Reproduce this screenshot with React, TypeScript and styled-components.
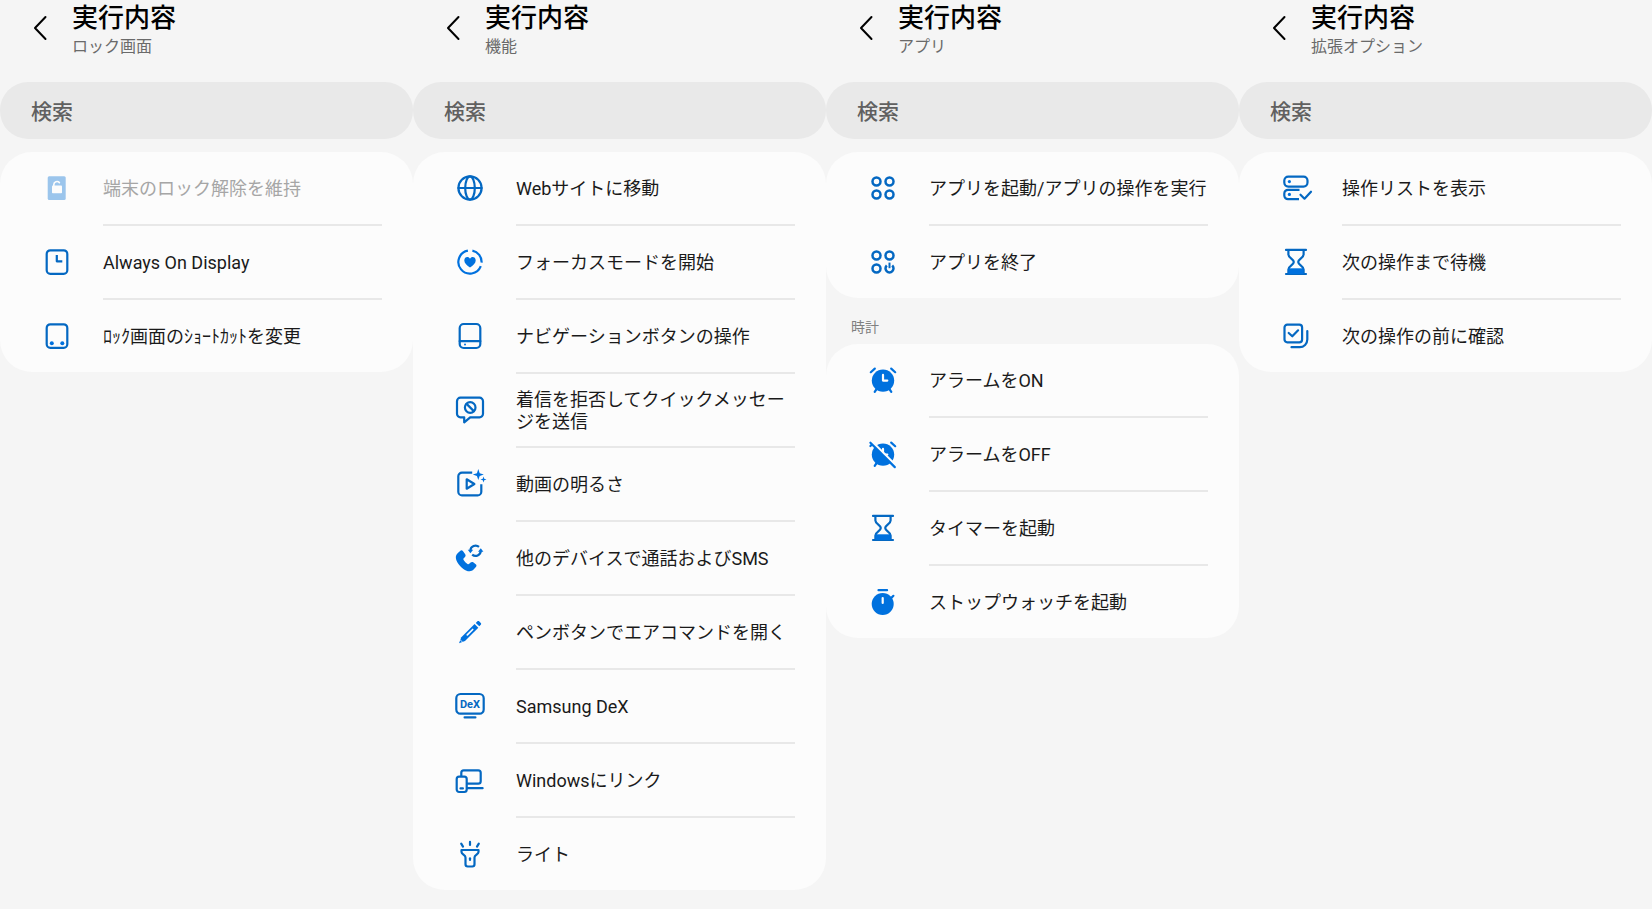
import React, { ReactNode } from 'react';
import styled, { createGlobalStyle } from 'styled-components';

const GlobalStyle = createGlobalStyle`
  *, *::before, *::after { box-sizing: border-box; }
  body {
    margin: 0;
    background: #f5f5f5;
    color: #1a1a1a;
    font-family: Roboto, "Noto Sans CJK JP", sans-serif;
  }
`;

const Page = styled.main`
  display: grid;
  grid-template-columns: repeat(4, minmax(0, 1fr));
  align-items: start;
`;

const Panel = styled.section`
  display: flex;
  flex-direction: column;
`;

const Header = styled.header`
  display: flex;
  align-items: flex-start;
  height: 82px;
`;

const BackButton = styled.button`
  display: flex;
  align-items: center;
  justify-content: flex-end;
  width: 48px;
  height: 56px;
  margin-right: 24px;
  padding: 0;
  border: 0;
  background: none;
  color: #000;
  cursor: pointer;
`;

const Title = styled.h1`
  margin: 0;
  padding-top: 1px;
  font-size: 26px;
  line-height: 34px;
  font-weight: 500;
  color: #000;
`;

const Subtitle = styled.p`
  margin: 2px 0 0;
  font-size: 16px;
  line-height: 20px;
  color: #6a6a6a;
`;

const SearchField = styled.input`
  width: 100%;
  height: 57px;
  padding: 2px 31px 0;
  border: 0;
  border-radius: 28px;
  background: #e9e9e9;
  color: #1a1a1a;
  font-family: inherit;
  font-size: 21px;
  font-weight: 500;

  &::placeholder { color: #606060; opacity: 1; }
`;

const Card = styled.ul`
  margin: 0;
  padding: 0;
  list-style: none;
  border-radius: 32px;
  background: #fcfcfc;
`;

const Groups = styled.div`
  padding-top: 13px;
`;

const GroupLabel = styled.h2`
  margin: 0;
  padding: 19px 25px 7px;
  font-size: 14px;
  line-height: 20px;
  font-weight: 400;
  color: #808080;
`;

const Item = styled.li`
  &:not(:last-child)::after {
    content: "";
    display: block;
    height: 2px;
    margin: 0 31px 0 103px;
    background: #e8e8e8;
  }
`;

const ActionButton = styled.button`
  display: flex;
  align-items: center;
  gap: 30px;
  width: 100%;
  min-height: 72px;
  padding: 12px 30px 12px 41px;
  border: 0;
  background: none;
  color: #1a1a1a;
  font-family: inherit;
  font-size: 18px;
  line-height: 22px;
  text-align: left;
  cursor: pointer;

  &:disabled { color: #a6a6a6; cursor: default; }
`;

const Label = styled.span`
  flex: 1;
  min-width: 0;
  padding-top: 2px;
`;

const Glyph = styled.svg`
  flex: none;
  width: 32px;
  height: 32px;
  overflow: visible;
  fill: none;
  stroke: #0468c2;
  stroke-width: 2.2;
  stroke-linecap: round;
  stroke-linejoin: round;

  .solid { fill: #0071de; stroke: none; }
  .knock { stroke: #fcfcfc; }
  .faded { fill: #9bc5ec; stroke: none; }
  .paper { fill: #fcfcfc; }
  text {
    fill: #0468c2;
    stroke: none;
    font: 700 11px Roboto, sans-serif;
  }
`;

const hourglass = (
  <>
    <path d="M6 3.900h20M6 28h20" />
    <path d="M8.400 4v4.500c0 3.600 5.400 4.600 5.400 7.500s-5.400 3.900-5.400 7.500V28M23.600 4v4.500c0 3.600-5.400 4.600-5.400 7.500s5.400 3.900 5.400 7.500V28" />
    <path className="solid" d="M8.400 22.300h15.200V28H8.400z" />
  </>
);

const spark = (x: number, y: number, r: number) => {
  const k = r * 0.25;
  return (
    <path
      className="solid"
      d={`M${x} ${y - r}L${x + k} ${y - k}L${x + r} ${y}L${x + k} ${y + k}L${x} ${y + r}L${x - k} ${y + k}L${x - r} ${y}L${x - k} ${y - k}Z`}
    />
  );
};

const glyphs = {
  unlock: (
    <>
      <rect className="faded" x="6.7" y="4.3" width="18" height="23.7" rx="1.5" />
      <rect className="paper" x="11" y="13.6" width="10" height="7.7" rx="0.8" stroke="none" />
      <path className="knock" strokeWidth="1.6" d="M12.800 14v-1.400a3.200 3.200 0 0 1 5.600-2" />
    </>
  ),
  clockScreen: (
    <>
      <rect x="5.7" y="4.3" width="20.6" height="23.6" rx="3.6" />
      <path strokeLinecap="butt" d="M15.800 9v6.300h5.500" />
    </>
  ),
  shortcuts: (
    <>
      <rect x="5.7" y="4.3" width="20.6" height="23.6" rx="3.6" />
      <circle className="solid" cx="10.8" cy="23.2" r="2" />
      <circle className="solid" cx="21.3" cy="23.2" r="2" />
    </>
  ),
  globe: (
    <>
      <circle cx="16" cy="16" r="11.6" />
      <ellipse cx="16" cy="16" rx="4.8" ry="11.6" />
      <path d="M4.400 16h23.200" />
    </>
  ),
  focus: (
    <>
      <path strokeLinecap="butt" stroke="#0071de" d="M18.400 4.600A11.600 11.600 0 0 1 27.600 16.600M26.800 20.200A11.600 11.600 0 1 1 13.900 4.600" />
      <path className="solid" d="M16 21.600c-3-2.200-5.700-4.300-5.700-7.200 0-3.600 4.200-4.400 5.700-1.700 1.500-2.700 5.700-1.900 5.700 1.700 0 2.900-2.700 5-5.700 7.200z" />
    </>
  ),
  navigation: (
    <>
      <rect x="5.7" y="4" width="20.6" height="24" rx="4" />
      <path d="M5.700 21.200h20.600" />
      <circle className="solid" cx="11" cy="24.600" r="1" />
    </>
  ),
  declined: (
    <>
      <path d="M6.500 3.700h19a3.500 3.500 0 0 1 3.500 3.500v12.600a3.500 3.500 0 0 1-3.500 3.500h-9.300l-6 5v-5H6.500A3.500 3.500 0 0 1 3 19.800V7.200a3.500 3.500 0 0 1 3.500-3.500z" />
      <circle cx="16.2" cy="13.5" r="5.3" />
      <path d="M12.600 9.900l7.200 7.200" />
    </>
  ),
  video: (
    <>
      <path strokeLinecap="butt" d="M18.200 4.600H8a3.700 3.700 0 0 0-3.700 3.700v15.400A3.700 3.700 0 0 0 8 27.400h15.600a3.700 3.700 0 0 0 3.700-3.700v-7.500" />
      <path d="M12.700 11.300v9.400l7.700-4.700z" />
      {spark(24.3, 6.5, 5.5)}
      {spark(29.5, 11.6, 3)}
    </>
  ),
  callSync: (
    <>
      <path className="solid" d="M3.600 11.300l2.500-2.400c.9-.9 2.100-.7 2.800.2l2.300 3.200c.6.900.5 1.900-.2 2.600l-1.300 1.400c-.5.500-.5 1.100-.1 1.700 1 1.600 2.300 2.900 3.900 3.900.6.400 1.200.4 1.700-.1l1.400-1.300c.7-.7 1.700-.8 2.600-.2l2.500 1.900c.9.700 1.100 1.900.2 2.800l-2.300 2.600C17 30.400 12.400 29.600 8.100 25.900 2.500 20.900-.2 14.800 3.600 11.300z" />
      <path strokeLinecap="butt" d="M16.400 8.500a5.200 5.200 0 0 1 8.600-3.600M26.800 8.900a5.200 5.200 0 0 1-8.600 3.700" />
      <path className="solid" d="M13.800 7.800h5.400l-2.800 3.500zM29.400 9.700h-5.400l2.800-3.500z" />
    </>
  ),
  pen: (
    <>
      <path className="solid" d="M5 27.300l2.300-6L20.600 8l3.700 3.700L11 25z" />
      <path className="solid" d="M21.800 6.900l1.600-1.600c.5-.5 1.200-.5 1.700 0l1.700 1.700c.5.500.5 1.200 0 1.700l-1.500 1.600z" />
      <path className="knock" strokeWidth="1.700" d="M13.300 18.900l5.400-5.400" />
      <path className="knock" strokeWidth="0.8" d="M6.300 23.900l2 2" />
    </>
  ),
  dex: (
    <>
      <rect x="2.3" y="4" width="27.4" height="19.6" rx="4.2" />
      <path d="M10.600 27.400h10.800" />
      <text x="16" y="18" textAnchor="middle">DeX</text>
    </>
  ),
  linked: (
    <>
      <path d="M7.300 12V8.800a2.500 2.500 0 0 1 2.500-2.500h14.400a2.500 2.500 0 0 1 2.500 2.500v8.400a2.500 2.500 0 0 1-2.500 2.500H13.400M13.400 24.200h15.200" />
      <rect x="2.700" y="12.700" width="10" height="15.300" rx="2.400" />
      <path d="M6.500 24.400h2.400" />
    </>
  ),
  torch: (
    <>
      <path d="M16 3.900v3M7.200 5.600l1.800 3M24.800 5.600L23 8.600" />
      <path d="M7.500 12h17v2c0 2.400-4 3-4 5.500v6.800a2.200 2.200 0 0 1-2.200 2.200h-4.600a2.200 2.200 0 0 1-2.200-2.200v-6.800c0-2.500-4-3.100-4-5.500z" />
      <path d="M16 20.300v1.600" />
    </>
  ),
  apps: (
    <g strokeWidth="2.500">
      <circle cx="9.500" cy="9.500" r="4" />
      <circle cx="22.500" cy="9.500" r="4" />
      <circle cx="9.500" cy="22.500" r="4" />
      <circle cx="22.500" cy="22.500" r="4" />
    </g>
  ),
  appsOff: (
    <g strokeWidth="2.500">
      <circle cx="9.500" cy="9.500" r="4" />
      <circle cx="22.500" cy="9.500" r="4" />
      <circle cx="9.500" cy="22.500" r="4" />
      <path strokeLinecap="butt" d="M19.800 19.500a4 4 0 1 0 5.400 0" />
      <path strokeLinecap="butt" strokeWidth="2" d="M22.500 16.600v5.600" />
    </g>
  ),
  alarm: (
    <g stroke="#0071de">
      <circle className="solid" cx="16" cy="16.6" r="11.2" />
      <path d="M3.800 8.200l4-3.600M28.200 8.200l-4-3.600M9.300 25.500l-1.600 2.300M22.700 25.500l1.600 2.300" />
      <path className="knock" d="M16 10.900v5.700h4.300" />
    </g>
  ),
  alarmOff: (
    <g stroke="#0071de">
      <circle className="solid" cx="16" cy="16.6" r="11.2" />
      <path d="M3.400 8l1.500-1.300M28.200 8.200l-4-3.600M9.300 25.500l-1.600 2.300" />
      <path className="knock" d="M16 10.900v5.700h4.300" />
      <path className="knock" strokeWidth="2.400" d="M5.500 4.200l24 24" />
      <path d="M3.400 4.700l24.400 24.400" />
    </g>
  ),
  hourglass,
  stopwatch: (
    <g stroke="#0071de">
      <circle className="solid" cx="15.7" cy="18" r="11" />
      <path d="M11.500 4.200h8.600M24.600 11.600l1.800-1.800" />
      <path className="knock" d="M15.700 12v5" />
    </g>
  ),
  listCheck: (
    <>
      <rect x="4.3" y="4.6" width="23.2" height="10" rx="4" />
      <path strokeLinecap="butt" d="M19.500 17.800H8a3.700 3.700 0 0 0-3.700 3.700v2A3.700 3.700 0 0 0 8 27.200h11" />
      <circle className="solid" cx="9.4" cy="9.6" r="1.6" />
      <circle className="solid" cx="9.4" cy="22.4" r="1.6" />
      <path d="M20.500 22.700l4 4 6.500-7" />
    </>
  ),
  confirm: (
    <>
      <rect x="4.5" y="4.7" width="17.6" height="17.6" rx="2.8" />
      <path d="M8.700 13l3.600 3.300 5.800-6" />
      <path d="M27.300 11v8.600a7.600 7.600 0 0 1-7.600 7.600h-8.200" />
    </>
  ),
} satisfies Record<string, ReactNode>;

type Action = { icon: keyof typeof glyphs; label: string; disabled?: boolean };
type Group = { heading?: string; actions: Action[] };
type Screen = { subtitle: string; groups: Group[] };

const screens: Screen[] = [
  {
    subtitle: 'ロック画面',
    groups: [
      {
        actions: [
          { icon: 'unlock', label: '端末のロック解除を維持', disabled: true },
          { icon: 'clockScreen', label: 'Always On Display' },
          { icon: 'shortcuts', label: 'ﾛｯｸ画面のｼｮｰﾄｶｯﾄを変更' },
        ],
      },
    ],
  },
  {
    subtitle: '機能',
    groups: [
      {
        actions: [
          { icon: 'globe', label: 'Webサイトに移動' },
          { icon: 'focus', label: 'フォーカスモードを開始' },
          { icon: 'navigation', label: 'ナビゲーションボタンの操作' },
          { icon: 'declined', label: '着信を拒否してクイックメッセージを送信' },
          { icon: 'video', label: '動画の明るさ' },
          { icon: 'callSync', label: '他のデバイスで通話およびSMS' },
          { icon: 'pen', label: 'ペンボタンでエアコマンドを開く' },
          { icon: 'dex', label: 'Samsung DeX' },
          { icon: 'linked', label: 'Windowsにリンク' },
          { icon: 'torch', label: 'ライト' },
        ],
      },
    ],
  },
  {
    subtitle: 'アプリ',
    groups: [
      {
        actions: [
          { icon: 'apps', label: 'アプリを起動/アプリの操作を実行' },
          { icon: 'appsOff', label: 'アプリを終了' },
        ],
      },
      {
        heading: '時計',
        actions: [
          { icon: 'alarm', label: 'アラームをON' },
          { icon: 'alarmOff', label: 'アラームをOFF' },
          { icon: 'hourglass', label: 'タイマーを起動' },
          { icon: 'stopwatch', label: 'ストップウォッチを起動' },
        ],
      },
    ],
  },
  {
    subtitle: '拡張オプション',
    groups: [
      {
        actions: [
          { icon: 'listCheck', label: '操作リストを表示' },
          { icon: 'hourglass', label: '次の操作まで待機' },
          { icon: 'confirm', label: '次の操作の前に確認' },
        ],
      },
    ],
  },
];

export default function App() {
  return (
    <>
      <GlobalStyle />
      <Page lang="ja">
        {screens.map((screen) => (
          <Panel key={screen.subtitle}>
            <Header>
              <BackButton type="button" aria-label="戻る">
                <svg width="16" height="26" viewBox="0 0 16 26" fill="none" stroke="currentColor" strokeWidth="2" strokeLinecap="round" strokeLinejoin="round">
                  <path d="M13.500 2L3 13l10.500 11" />
                </svg>
              </BackButton>
              <div>
                <Title>実行内容</Title>
                <Subtitle>{screen.subtitle}</Subtitle>
              </div>
            </Header>
            <SearchField type="search" placeholder="検索" aria-label="検索" />
            <Groups>
              {screen.groups.map((group, index) => (
                <React.Fragment key={index}>
                  {group.heading && <GroupLabel>{group.heading}</GroupLabel>}
                  <Card>
                    {group.actions.map((action) => (
                      <Item key={action.label}>
                        <ActionButton type="button" disabled={action.disabled}>
                          <Glyph viewBox="0 0 32 32" aria-hidden="true">{glyphs[action.icon]}</Glyph>
                          <Label>{action.label}</Label>
                        </ActionButton>
                      </Item>
                    ))}
                  </Card>
                </React.Fragment>
              ))}
            </Groups>
          </Panel>
        ))}
      </Page>
    </>
  );
}
